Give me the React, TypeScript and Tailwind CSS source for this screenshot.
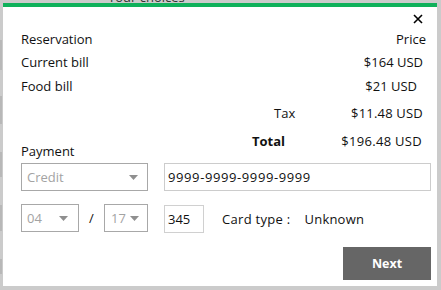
import React from "react";

function Caret() {
  return (
    <svg width="9" height="5" viewBox="0 0 9 5" className="shrink-0">
      <polygon points="0,0 9,0 4.5,5" fill="#8f8f8f" />
    </svg>
  );
}

export default function App() {
  return (
    <div
      className="relative w-[441px] h-[290px] overflow-hidden bg-[#cbcbcb] pt-[3px] pl-[3px]"
      style={{ fontFamily: '"Open Sans", "Noto Sans", sans-serif' }}
    >
      <div className="absolute top-[-10px] left-[108px] text-[13px] leading-[14px] text-[#333]">Your choices</div>
      <div className="absolute left-0 top-[40px] w-[2px] h-[30px] bg-[#b8b8b8]" />
      <div className="absolute left-0 top-[96px] w-[2px] h-[28px] bg-[#b8b8b8]" />
      <div className="absolute left-0 top-[152px] w-[2px] h-[25px] bg-[#b8b8b8]" />
      <div className="absolute left-0 top-[205px] w-[2px] h-[26px] bg-[#b8b8b8]" />
      <div className="absolute left-0 top-[259px] w-[2px] h-[15px] bg-[#b8b8b8]" />
      <div className="relative w-[434px] h-[283px] bg-white flex flex-col text-[13px] text-[#111] leading-[20px]">
        <div className="h-[4px] bg-[#0fb15b]" />
        <div className="flex justify-end pr-[14px] pt-[7px] h-[22px]">
          <svg width="10" height="10" viewBox="0 0 10 10">
            <path d="M1 1 L9 9 M9 1 L1 9" stroke="#000" strokeWidth="1.6" />
          </svg>
        </div>
        <div className="flex flex-col pl-[18px] pr-[6px]">
          <div className="flex justify-between pr-[5px] h-[20px]">
            <span>Reservation</span>
            <span>Price</span>
          </div>
          <div className="flex justify-between pr-[8px] h-[20px] mt-[3px]">
            <span>Current bill</span>
            <span>$164 USD</span>
          </div>
          <div className="flex justify-between pr-[14px] h-[20px] mt-[4px]">
            <span>Food bill</span>
            <span>$21 USD</span>
          </div>
          <div className="flex pl-[253px] pr-[8px] h-[20px] mt-[7px]">
            <span>Tax</span>
            <span className="ml-auto tracking-[0.2px]">$11.48 USD</span>
          </div>
          <div className="flex pl-[231px] pr-[9px] h-[20px] mt-[8px]">
            <span className="font-bold">Total</span>
            <span className="ml-auto tracking-[0.3px]">$196.48 USD</span>
          </div>
          <div className="h-[20px] mt-[-10px]">Payment</div>
          <div className="flex mt-[2px] gap-[16px]">
            <div className="w-[127px] h-[28px] border border-[#a8a8a8] flex items-center justify-between pl-[5px] pr-[9px] text-[#a3a3a3]">
              <span>Credit</span>
              <Caret />
            </div>
            <div className="flex-1 h-[28px] border border-[#cccccc] flex items-center pl-[3px] text-[#111] tracking-[0.6px]">
              9999-9999-9999-9999
            </div>
          </div>
          <div className="flex mt-[13px] items-start">
            <div className="w-[58px] h-[28px] border border-[#a8a8a8] flex items-center justify-between pl-[5px] pr-[10px] text-[#a3a3a3]">
              <span>04</span>
              <Caret />
            </div>
            <span className="w-[25px] text-center h-[28px] leading-[28px] text-[#111]">/</span>
            <div className="w-[44px] h-[28px] border border-[#a8a8a8] flex items-center justify-between pl-[6px] pr-[8px] text-[#a3a3a3]">
              <span>17</span>
              <Caret />
            </div>
            <div className="ml-[16px] mt-[1px] w-[40px] h-[28px] border border-[#d0d0d0] flex items-center pl-[3px] text-[#111]">
              345
            </div>
            <span className="ml-[18px] h-[28px] leading-[30px] tracking-[0.3px]">Card type :</span>
            <span className="ml-[14px] h-[28px] leading-[30px] tracking-[0.2px]">Unknown</span>
          </div>
          <div className="flex justify-end mt-[14px]">
            <div className="w-[88px] h-[33px] bg-[#666666] text-white font-bold text-[12.5px] flex items-center justify-center">
              Next
            </div>
          </div>
        </div>
      </div>
    </div>
  );
}
